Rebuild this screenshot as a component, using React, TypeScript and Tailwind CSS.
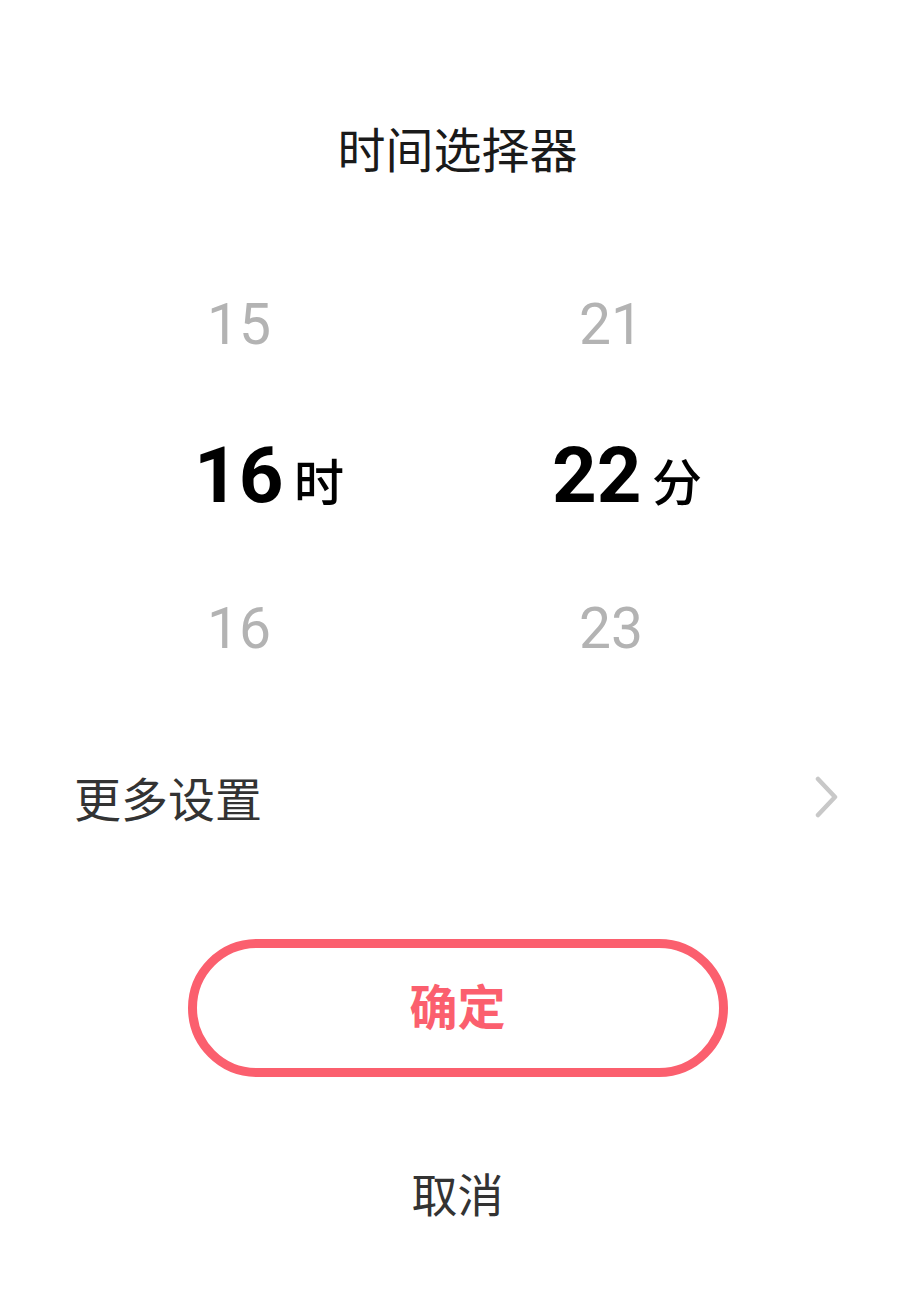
const cjk = { fontFamily: '"Noto Sans CJK SC", "Noto Sans", sans-serif' };
const num = { fontFamily: 'Roboto, "Noto Sans CJK SC", sans-serif' };

interface ColumnProps {
    prev: string;
    value: string;
    next: string;
    unit: string;
    offset: string;
}

function Column({ prev, value, next, unit, offset }: ColumnProps) {
    return (
        <div className="w-[372px] flex flex-col">
            <div className="h-[152px] flex items-center justify-center text-[57px] leading-none text-[#b3b3b3]" style={num}>
                {prev}
            </div>
            <div className={`h-[152px] flex items-center ${offset}`}>
                <span className="w-[88px] text-center text-[78px] leading-none font-bold text-black" style={num}>
                    {value}
                </span>
                <span className="ml-[12px] mt-[6px] text-[50px] leading-none font-medium text-black" style={cjk}>
                    {unit}
                </span>
            </div>
            <div className="h-[152px] flex items-center justify-center text-[57px] leading-none text-[#b3b3b3]" style={num}>
                {next}
            </div>
        </div>
    );
}

export default function App() {
    return (
        <div className="w-full min-h-[1314px] bg-white flex flex-col items-center" style={cjk}>
            <h1 className="pt-[123px] text-[48px] leading-[48px] font-normal text-[#1a1a1a]">时间选择器</h1>

            <div className="mt-[77px] w-full flex pl-[53px]">
                <Column prev="15" value="16" next="16" unit="时" offset="pl-[141px]" />
                <Column prev="21" value="22" next="23" unit="分" offset="pl-[127px]" />
            </div>

            <div className="mt-[44px] w-full h-[96px] flex items-center justify-between pl-[74px] pr-[76px]">
                <span className="text-[47px] leading-none text-[#333333]">更多设置</span>
                <svg width="24" height="42" viewBox="0 0 24 42" fill="none" className="mt-[2px]">
                    <polyline points="3,3 20,21 3,39" stroke="#c8c8c8" strokeWidth="4.5" strokeLinecap="round" strokeLinejoin="round" />
                </svg>
            </div>

            <button className="mt-[95px] w-[540px] h-[138px] rounded-full border-[9px] border-[#fb5f6e] flex items-center justify-center">
                <span className="mb-[8px] text-[48px] leading-none font-bold text-[#fb5f6e]">确定</span>
            </button>

            <button className="mt-[92px] text-[46px] leading-none text-[#333333]">取消</button>
        </div>
    );
}
